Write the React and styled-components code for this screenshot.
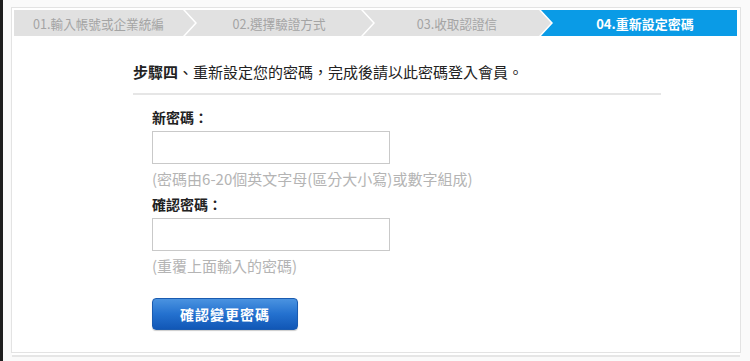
import React from "react";
import styled, { createGlobalStyle } from "styled-components";

const Global = createGlobalStyle`
  html, body { margin: 0; padding: 0; background: #ffffff; }
  body { font-family: "Noto Sans CJK TC", "Noto Sans", sans-serif; }
  * { box-sizing: border-box; }
`;

const Frame = styled.div`
  width: 750px;
  height: 361px;
  border-left: 3px solid #1e1e1e;
  background: #fafafa;
  padding: 7px 9px 0 8px;
`;

const Panel = styled.div`
  height: 346px;
  background: #ffffff;
  border: 1px solid #e3e3e3;
  padding: 2px 3px 0 2px;
  box-shadow: 0 3px 0 -1px #ffffff, 0 5px 0 -1px #e6e6e6;
`;

const StepBar = styled.div`
  display: flex;
  height: 26px;
`;

const Step = styled.div`
  flex: ${(p) => (p.$last ? "1 1 auto" : "none")};
  width: ${(p) => (p.$last ? "auto" : `${p.$w}px`)};
  margin-left: ${(p) => (p.$first ? "0" : "-10px")};
  height: 26px;
  display: flex;
  align-items: center;
  justify-content: center;
  padding-left: ${(p) => (p.$first ? "0" : "12px")};
  padding-right: ${(p) => (p.$last ? "0" : "12px")};
  background: ${(p) => (p.$active ? "#0a9be6" : "#e1e1e1")};
  color: ${(p) => (p.$active ? "#ffffff" : "#a4a4a4")};
  font-size: ${(p) => (p.$active ? "13px" : "12.6px")};
  font-weight: ${(p) => (p.$active ? 700 : 400)};
  white-space: nowrap;
  clip-path: ${(p) =>
    p.$first
      ? "polygon(0 0, calc(100% - 12px) 0, 100% 50%, calc(100% - 12px) 100%, 0 100%)"
      : p.$last
      ? "polygon(0 0, 100% 0, 100% 100%, 0 100%, 12px 50%)"
      : "polygon(0 0, calc(100% - 12px) 0, 100% 50%, calc(100% - 12px) 100%, 0 100%, 12px 50%)"};
`;

const Content = styled.div`
  padding: 25px 0 0 119px;
  width: 647px;
`;

const Heading = styled.div`
  font-size: 15px;
  line-height: 22px;
  color: #222222;
  padding-bottom: 10px;
  border-bottom: 2px solid #e6e6e6;
  white-space: nowrap;
`;

const Strong = styled.b`
  font-weight: 700;
`;

const Form = styled.div`
  display: flex;
  flex-direction: column;
  padding: 11px 0 0 19px;
`;

const Label = styled.div`
  font-size: 14px;
  font-weight: 700;
  color: #222222;
  line-height: 22px;
  margin-bottom: 3px;
`;

const Input = styled.input`
  width: 238px;
  height: 33px;
  border: 1px solid #c9c9c9;
  background: #ffffff;
  outline: none;
  padding: 0 6px;
`;

const Hint = styled.div`
  font-size: 15px;
  color: #b4b4b4;
  line-height: 22px;
  margin-top: 4px;
  margin-bottom: ${(p) => p.$mb}px;
  white-space: nowrap;
`;

const Button = styled.button`
  width: 146px;
  height: 32px;
  border: 1px solid #1a5bb0;
  border-radius: 4px;
  background: linear-gradient(#4a93e0, #2471cf 50%, #1157b6);
  color: #ffffff;
  font-family: "Noto Sans CJK TC", sans-serif;
  font-size: 14px;
  font-weight: 700;
  letter-spacing: 1px;
  box-shadow: 0 1px 1px rgba(0, 0, 0, 0.2);
  cursor: pointer;
`;

const steps = [
  { label: "01.輸入帳號或企業統編", w: 181 },
  { label: "02.選擇驗證方式", w: 188 },
  { label: "03.收取認證信", w: 188 },
  { label: "04.重新設定密碼", active: true },
];

export default function App() {
  return (
    <>
      <Global />
      <Frame>
        <Panel>
          <StepBar>
            {steps.map((s, i) => (
              <Step
                key={s.label}
                $w={s.w}
                $first={i === 0}
                $last={i === steps.length - 1}
                $active={s.active}
              >
                {s.label}
              </Step>
            ))}
          </StepBar>
          <Content>
            <Heading>
              <Strong>步驟四</Strong>、重新設定您的密碼，完成後請以此密碼登入會員。
            </Heading>
            <Form>
              <Label>新密碼：</Label>
              <Input type="password" />
              <Hint $mb={3}>(密碼由6-20個英文字母(區分大小寫)或數字組成)</Hint>
              <Label>確認密碼：</Label>
              <Input type="password" />
              <Hint $mb={21}>(重覆上面輸入的密碼)</Hint>
              <div>
                <Button>確認變更密碼</Button>
              </div>
            </Form>
          </Content>
        </Panel>
      </Frame>
    </>
  );
}
